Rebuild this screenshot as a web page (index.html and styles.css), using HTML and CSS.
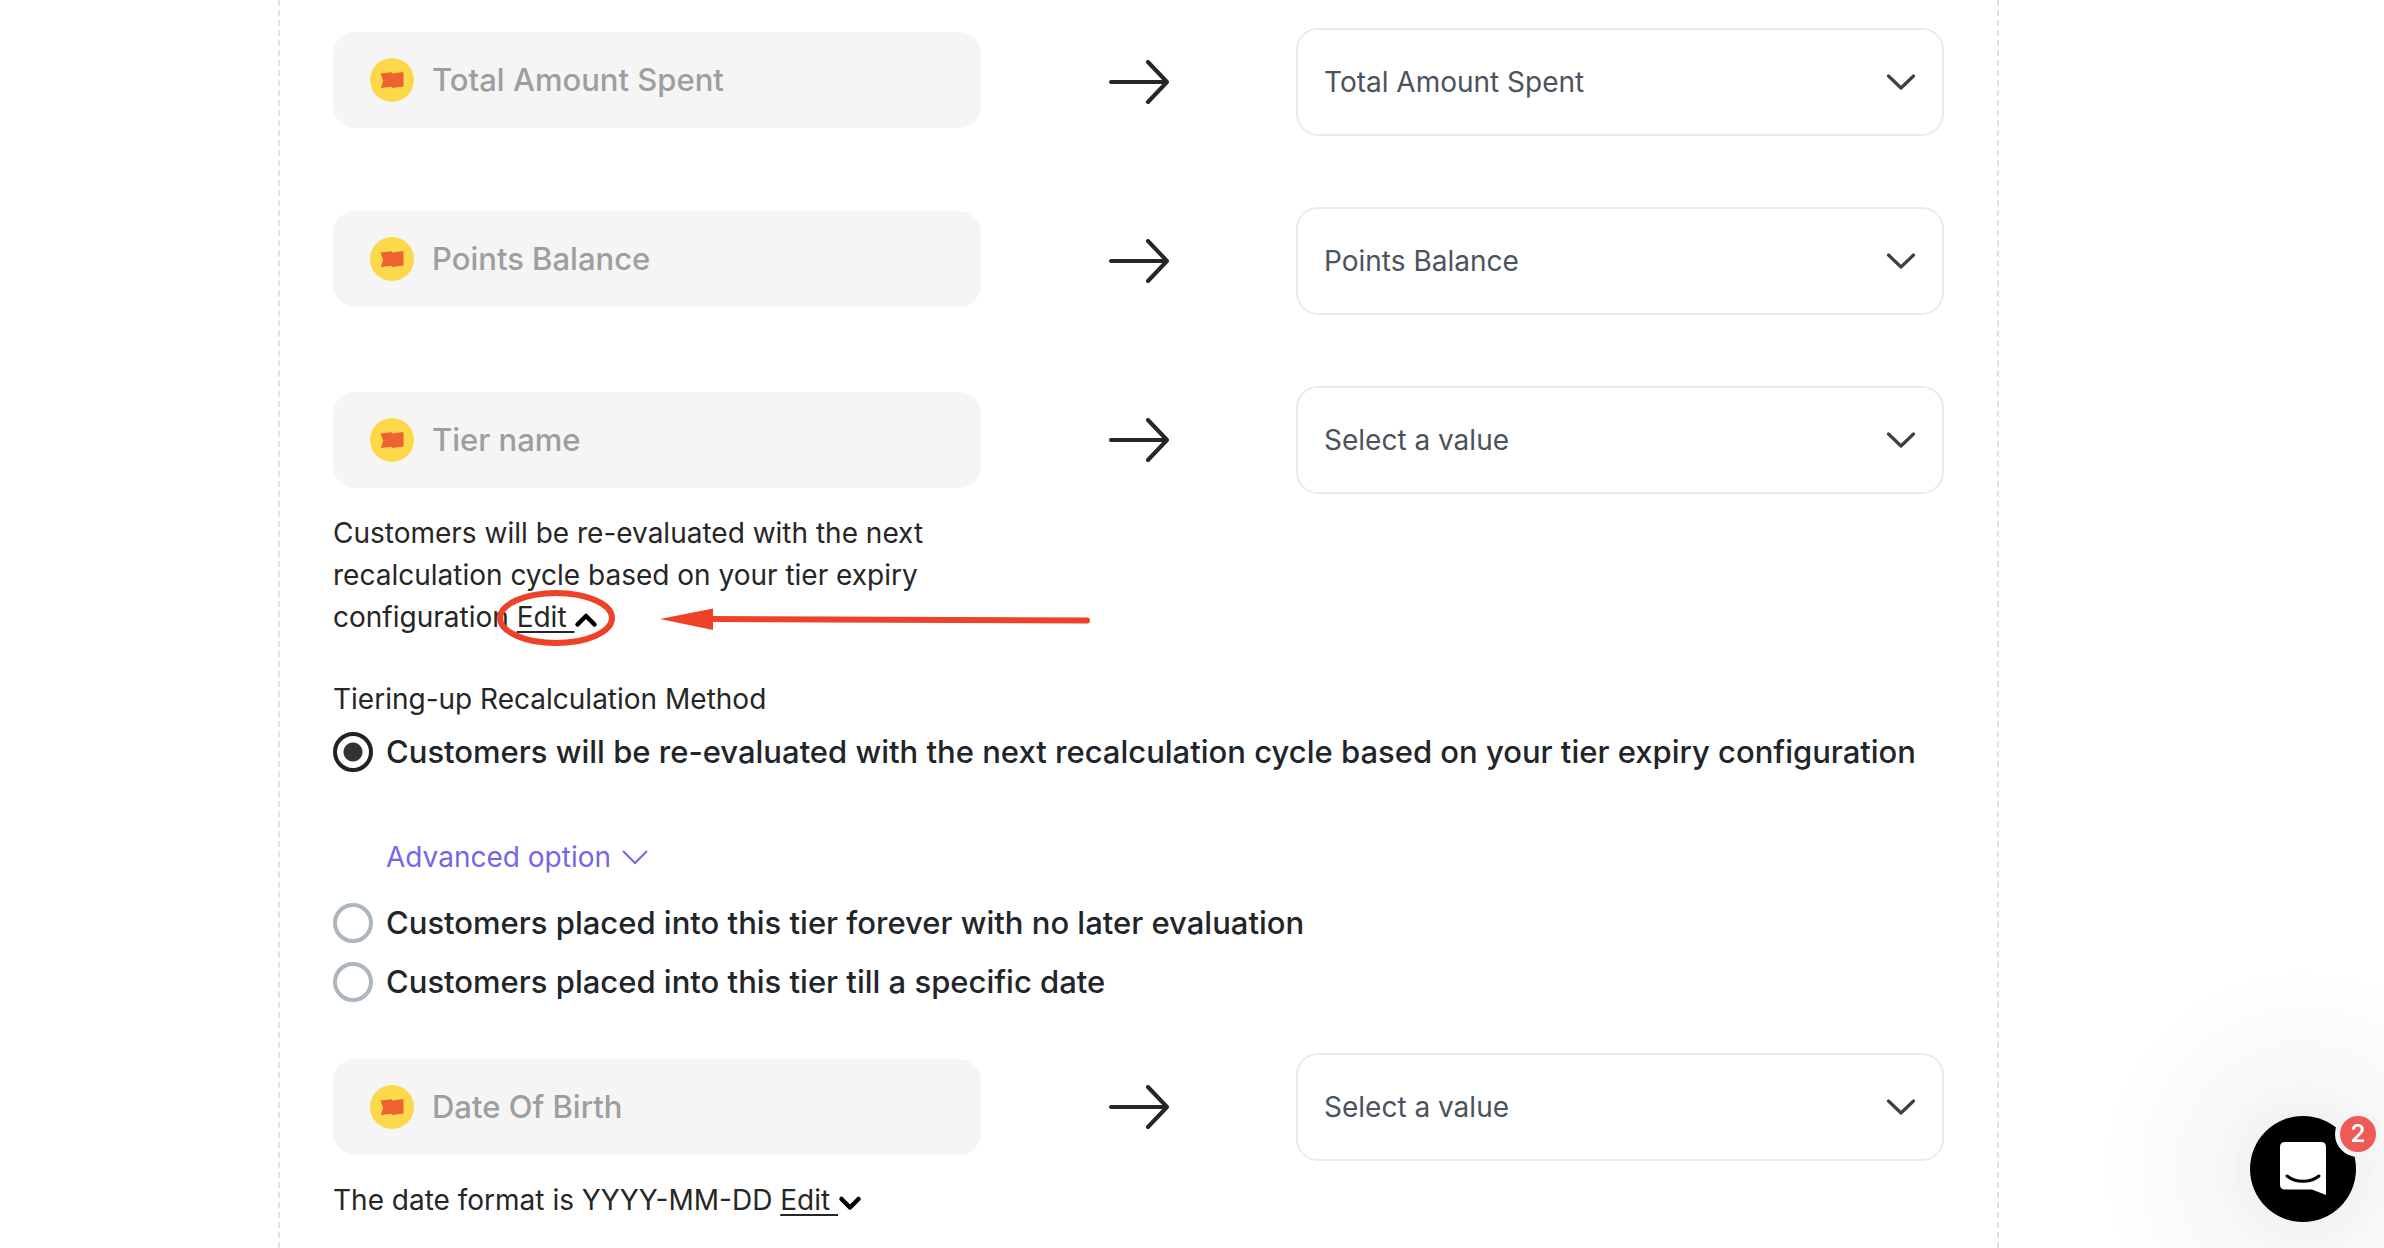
FILE: index.html
```html
<!DOCTYPE html>
<html lang="en">
<head>
  <meta charset="UTF-8">
  <title>Field Mapping</title>
  <meta name="viewport" content="width=device-width, initial-scale=1.0">
  <link rel="stylesheet" href="styles.css">
</head>
<body>
  <!-- shared icons -->
  <svg class="sprite" aria-hidden="true">
    <symbol id="ticket" viewBox="0 0 44 44">
      <circle cx="22" cy="22" r="22" fill="#fcd84a"/>
      <path d="M10.500 15.500L21.500 14.200L22.500 15.500L33.500 14V28.500L22.500 30L21.500 28.800L11 30L13.200 22.500Z" fill="#ec6231"/>
    </symbol>
    <symbol id="arrow" viewBox="0 0 60 44">
      <path d="M2 22H58M39 2L58 22L39 42" fill="none" stroke="#262626" stroke-width="4" stroke-linecap="round" stroke-linejoin="round"/>
    </symbol>
    <symbol id="chevron" viewBox="0 0 30 16">
      <path d="M2.500 2L15 14L27.500 2" fill="none" stroke="#404040" stroke-width="3.200" stroke-linecap="round" stroke-linejoin="round"/>
    </symbol>
  </svg>

  <main class="panel">
    <div class="row">
      <div class="source">
        <label class="field" for="spent"><svg class="coin"><use href="#ticket"/></svg>Total Amount Spent</label>
      </div>
      <svg class="arrow"><use href="#arrow"/></svg>
      <div class="select-box">
        <select id="spent"><option>Total Amount Spent</option></select>
        <svg class="chevron"><use href="#chevron"/></svg>
      </div>
    </div>

    <div class="row">
      <div class="source">
        <label class="field" for="points"><svg class="coin"><use href="#ticket"/></svg>Points Balance</label>
      </div>
      <svg class="arrow"><use href="#arrow"/></svg>
      <div class="select-box">
        <select id="points"><option>Points Balance</option></select>
        <svg class="chevron"><use href="#chevron"/></svg>
      </div>
    </div>

    <div class="row">
      <div class="source with-note">
        <label class="field" for="tier"><svg class="coin"><use href="#ticket"/></svg>Tier name</label>
        <p class="note">Customers will be re-evaluated with the next recalculation cycle based on your tier expiry configuration <a href="#method" class="edit"><span>Edit&nbsp;</span><svg class="caret" viewBox="0 0 24 16"><path d="M3.500 12.500L12 4L20.500 12.500"/></svg></a></p>
        <svg class="callout" viewBox="0 0 600 60" aria-hidden="true">
          <ellipse cx="59" cy="30" rx="56" ry="25"/>
          <path class="line" d="M210 31L590 32.500"/>
          <path class="head" d="M163 31L216 20.500V42Z"/>
        </svg>
      </div>
      <svg class="arrow"><use href="#arrow"/></svg>
      <div class="select-box">
        <select id="tier"><option>Select a value</option></select>
        <svg class="chevron"><use href="#chevron"/></svg>
      </div>
    </div>

    <fieldset class="method" id="method">
      <legend>Tiering-up Recalculation Method</legend>
      <label class="option"><input type="radio" name="method" checked>Customers will be re-evaluated with the next recalculation cycle based on your tier expiry configuration</label>
      <button type="button" class="advanced">Advanced option
        <svg class="advanced-icon" viewBox="0 0 28 16"><path d="M2 2L14 14L26 2"/></svg>
      </button>
      <label class="option"><input type="radio" name="method">Customers placed into this tier forever with no later evaluation</label>
      <label class="option"><input type="radio" name="method">Customers placed into this tier till a specific date</label>
    </fieldset>

    <div class="row">
      <div class="source with-note">
        <label class="field" for="birth"><svg class="coin"><use href="#ticket"/></svg>Date Of Birth</label>
        <p class="note">The date format is YYYY-MM-DD <a href="#birth" class="edit"><span>Edit&nbsp;</span><svg class="caret" viewBox="0 0 24 16"><path d="M3.500 4L12 12.500L20.500 4"/></svg></a></p>
      </div>
      <svg class="arrow"><use href="#arrow"/></svg>
      <div class="select-box">
        <select id="birth"><option>Select a value</option></select>
        <svg class="chevron"><use href="#chevron"/></svg>
      </div>
    </div>
  </main>

  <div class="chat">
    <button type="button" class="chat-btn" aria-label="Open chat">
      <svg class="chat-icon" viewBox="0 0 48 54">
        <path d="M6 0H42Q47 0 47 5V53L33 47.500H6Q1 47.500 1 42.500V5Q1 0 6 0Z" fill="#fff"/>
        <path d="M8 34C17 41 31 41 40 34" fill="none" stroke="#000" stroke-width="3" stroke-linecap="round"/>
      </svg>
    </button>
    <span class="badge">2</span>
  </div>
</body>
</html>
```
FILE: styles.css
```css
* {
  box-sizing: border-box;
}

body {
  margin: 0;
  font-family: Inter, "Liberation Sans", sans-serif;
  font-size: 28px;
  line-height: 42px;
  color: #262626;
  background: #fff;
}

.sprite {
  position: absolute;
  width: 0;
  height: 0;
}

.panel {
  min-height: 100vh;
  margin: 0 385px 0 278px;
  padding: 28px 53px 0;
  border: 2px dashed #e2e2e2;
  border-width: 0 2px;
}

/* Mapping rows */
.row {
  display: grid;
  grid-template-columns: 1fr 315px 1fr;
  align-items: start;
  margin-bottom: 71px;
}

.row:last-child {
  margin-bottom: 0;
}

.source {
  position: relative;
  padding-top: 4px;
}

.with-note {
  padding-top: 6px;
}

.field {
  display: flex;
  align-items: center;
  gap: 18px;
  height: 96px;
  padding: 0 37px;
  border-radius: 22px;
  background: #f5f5f5;
  color: #9e9e9e;
  font-size: 31px;
  font-weight: 500;
}

.coin {
  width: 44px;
  height: 44px;
}

.arrow {
  width: 60px;
  height: 44px;
  margin-top: 32px;
  justify-self: center;
}

.select-box {
  display: grid;
  align-items: center;
}

.select-box select,
.chevron {
  grid-area: 1 / 1;
}

.select-box select {
  appearance: none;
  width: 100%;
  height: 108px;
  padding: 0 64px 0 26px;
  border: 2px solid #ebebeb;
  border-radius: 22px;
  background: #fff;
  color: #4b535c;
  font: inherit;
}

.chevron {
  justify-self: end;
  width: 30px;
  height: 16px;
  margin-right: 28px;
  pointer-events: none;
}

.note {
  margin: 24px 0 0;
}

.edit {
  color: inherit;
  text-decoration: none;
  white-space: nowrap;
}

.edit span {
  text-decoration: underline;
  text-underline-offset: 4px;
}

.caret {
  width: 24px;
  height: 16px;
  vertical-align: -1px;
}

.caret path {
  fill: none;
  stroke: #000;
  stroke-width: 4.5;
  stroke-linecap: round;
  stroke-linejoin: round;
}

/* Hand drawn pointer over the edit link */
.callout {
  position: absolute;
  left: 164px;
  bottom: -10px;
  width: 600px;
  height: 60px;
  pointer-events: none;
}

.callout ellipse,
.callout .line {
  fill: none;
  stroke: #ee4127;
  stroke-width: 6;
  stroke-linecap: round;
}

.callout .head {
  fill: #ee4127;
}

/* Recalculation method */
.method {
  margin: -31px 0 51px;
  padding: 0;
  border: 0;
}

.method legend {
  padding: 0;
  margin-bottom: 12px;
}

.option {
  display: flex;
  align-items: center;
  gap: 13px;
  margin-bottom: 19px;
  font-size: 31px;
  font-weight: 500;
  line-height: 40px;
  color: #212529;
}

.option:last-child {
  margin-bottom: 0;
}

.option input {
  appearance: none;
  flex: none;
  width: 40px;
  height: 40px;
  margin: 0;
  border: 4px solid #adb5bd;
  border-radius: 50%;
}

.option input:checked {
  border-color: #20212b;
  background: radial-gradient(circle, #333 9px, #fff 10px);
}

.advanced {
  display: flex;
  align-items: center;
  gap: 10px;
  margin: 64px 0 25px 53px;
  padding: 0;
  border: 0;
  background: none;
  color: #7367e8;
  font: inherit;
}

.advanced-icon {
  width: 28px;
  height: 16px;
}

.advanced-icon path {
  fill: none;
  stroke: #7367e8;
  stroke-width: 2;
}

/* Chat launcher */
.chat {
  position: fixed;
  right: 28px;
  bottom: 26px;
  width: 106px;
  height: 106px;
}

.chat::before {
  content: "";
  position: absolute;
  inset: -150px;
  border-radius: 50%;
  background: radial-gradient(closest-side, rgba(0, 0, 0, 0.05), rgba(0, 0, 0, 0.02) 60%, transparent);
  pointer-events: none;
}

.chat-btn {
  position: relative;
  display: grid;
  place-items: center;
  width: 100%;
  height: 100%;
  padding: 0;
  border: 0;
  border-radius: 50%;
  background: #000;
  box-shadow: 0 2px 64px rgba(0, 0, 0, 0.05);
}

.chat-icon {
  width: 48px;
  height: 54px;
}

.badge {
  position: absolute;
  top: -5px;
  right: -25px;
  width: 46px;
  height: 46px;
  border: 5px solid #f4f4f4;
  border-radius: 50%;
  background: #ee5a55;
  color: #fff;
  font-size: 24px;
  font-weight: 600;
  line-height: 36px;
  text-align: center;
}
```
